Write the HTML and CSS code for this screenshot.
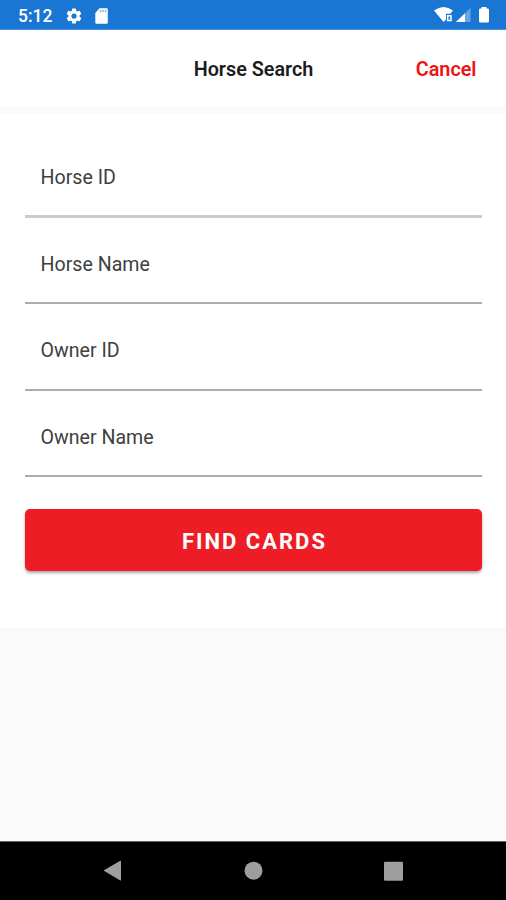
FILE: index.html
```html
<!DOCTYPE html>
<html lang="en">
<head>
<meta charset="utf-8">
<title>Horse Search</title>
<link rel="stylesheet" href="styles.css">
</head>
<body>
<div class="screen">
  <div class="status">
    <span class="clock">5:12</span>
    <svg class="gear" width="18" height="18" viewBox="0 0 24 24"><path fill="#fff" d="M19.43 12.98c.04-.32.07-.64.07-.98s-.03-.66-.07-.98l2.11-1.65c.19-.15.24-.42.12-.64l-2-3.46c-.12-.22-.39-.3-.61-.22l-2.49 1c-.52-.4-1.080-.73-1.690-.98l-.38-2.650A.49.49 0 0 0 14 2h-4c-.25 0-.46.18-.49.42l-.38 2.650c-.61.25-1.170.59-1.690.98l-2.490-1c-.23-.09-.49 0-.61.22l-2 3.460c-.13.22-.07.49.12.64l2.110 1.650c-.04.32-.07.65-.07.98s.03.66.07.98l-2.110 1.650c-.19.15-.24.42-.12.64l2 3.460c.12.22.39.3.61.22l2.490-1c.52.4 1.080.73 1.690.98l.38 2.650c.03.24.24.42.49.42h4c.25 0 .46-.18.49-.42l.38-2.650c.61-.25 1.170-.59 1.690-.98l2.490 1c.23.09.49 0 .61-.22l2-3.460c.12-.22.07-.49-.12-.64l-2.110-1.650zM12 15.500a3.500 3.500 0 1 1 0-7 3.500 3.500 0 0 1 0 7z"/></svg>
    <svg class="card" width="13" height="16" viewBox="0 0 13 16"><path fill="#fff" d="M4.500.3H11.500a1.300 1.300 0 0 1 1.300 1.300V14.400a1.300 1.300 0 0 1-1.300 1.300H1.600A1.300 1.300 0 0 1 .3 14.400V5z"/><path stroke="#1976d2" stroke-opacity=".5" stroke-width="1.500" d="M5.500 1.800v2.400M8 1.800v2.400M10.500 1.800v2.400"/></svg>
    <svg class="signals" width="58" height="20" viewBox="0 0 58 20"><path fill="#fff" d="M0 5.500Q9.500-1.500 19 5.500L16.300 8.800H12V14.500L9.500 17z"/><path fill="none" stroke="#fff" stroke-width="1.500" d="M13.700 10.700H17V15.500H13.700z"/><path fill="#fff" fill-opacity=".35" d="M36.500 3V17H22z"/><path fill="#fff" d="M31 8.300V17H22z"/><path fill="#fff" d="M47.500 2h5v1.500h1.300q1.200 0 1.200 1.200V16.300q0 1.200-1.200 1.200H46.200q-1.200 0-1.200-1.200V4.700q0-1.200 1.200-1.200h1.300z"/></svg>
  </div>
  <header class="header">
    <span></span>
    <h1 class="title">Horse Search</h1>
    <a class="cancel">Cancel</a>
  </header>
  <main class="form">
    <div class="field first"><label>Horse ID</label></div>
    <div class="field"><label>Horse Name</label></div>
    <div class="field"><label>Owner ID</label></div>
    <div class="field"><label>Owner Name</label></div>
    <button class="find">FIND CARDS</button>
  </main>
  <nav class="nav">
    <svg width="506" height="58" viewBox="0 0 506 58"><g fill="#9e9e9e"><path d="M103.500 28.500 120.300 18.800Q121 18.500 121 19.300V38Q121 38.800 120.300 38.400z"/><circle cx="253.500" cy="28.700" r="9"/><rect x="384" y="19.700" width="19" height="19" rx="1"/></g></svg>
  </nav>
</div>
</body>
</html>
```
FILE: styles.css
```css
* { box-sizing: border-box; }
body { margin: 0; font-family: Roboto, "Liberation Sans", sans-serif; }
.screen { width: 506px; height: 900px; display: flex; flex-direction: column; background: #fafafa; }
.status { height: 30px; flex: none; background: #1976d2; border-bottom: 1px solid #4a90da; display: flex; align-items: center; padding: 1px 14px 0 18px; color: #fff; }
.clock { font-size: 17.5px; font-weight: 500; line-height: 20px; width: 34px; margin-top: 2px; white-space: nowrap; }
.gear { margin-left: 13px; margin-top: 1px; }
.card { margin-left: 12px; margin-top: 1px; }
.signals { margin-left: auto; }
.header { height: 76px; flex: none; background: #fff; display: grid; grid-template-columns: 1fr auto 1fr; align-items: center; padding: 4px 29.5px 0 30.5px; }
.title { margin: 0; font-size: 19.8px; font-weight: 600; line-height: 24px; color: #1c1c1c; }
.cancel { justify-self: end; font-size: 19.8px; font-weight: 600; line-height: 24px; color: #ee1414; }
.form { height: 514px; flex: none; margin-top: 8px; background: #fff; padding: 23px 24px 0 25px; }
.field { height: 86.4px; padding: 35px 15px 0 15.5px; border-bottom: 2px solid #acacac; font-size: 19.6px; line-height: 24px; color: #404040; }
.field.first { height: 81px; padding-top: 29px; border-bottom: 3px solid #ccc; }
.find { display: block; width: 457px; height: 62px; margin-top: 32px; padding: 4px 0 0 2px; border: 0; border-radius: 5px; background: #ee1c25; color: #fff; font: 700 22px/24px Roboto, sans-serif; letter-spacing: 2px; box-shadow: 0 2px 3px rgba(0,0,0,.35); }
.nav { height: 59px; flex: none; margin-top: auto; background: #000; border-top: 1px solid #666; }
.nav svg { display: block; }
```
